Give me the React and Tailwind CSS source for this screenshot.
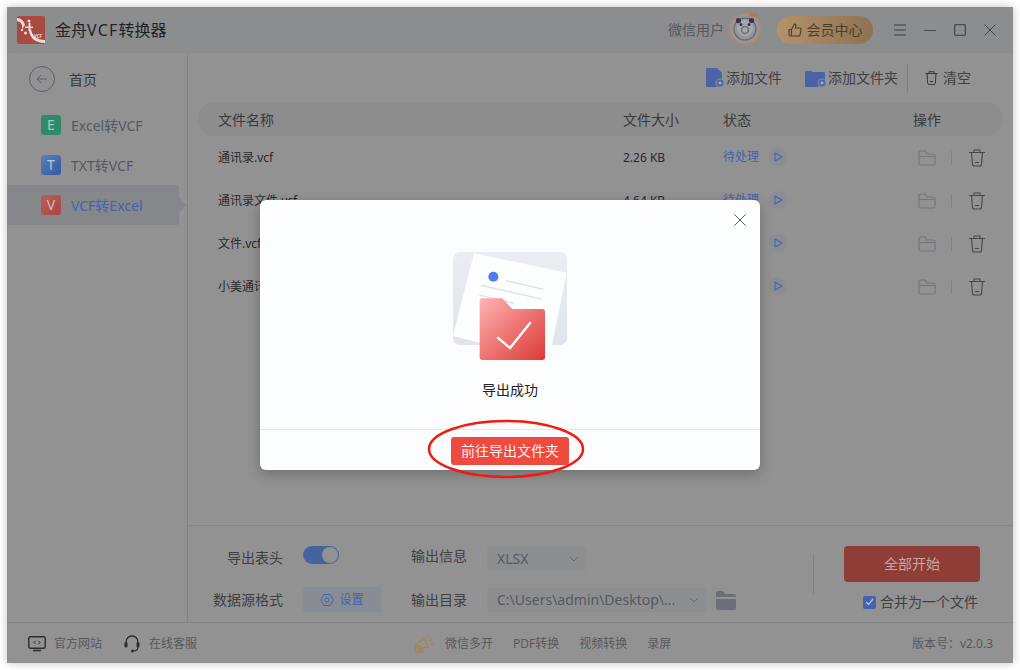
import React from "react";

const rows = [
  ["通讯录.vcf", "2.26 KB"],
  ["通讯录文件.vcf", "4.64 KB"],
  ["文件.vcf", "1.28 KB"],
  ["小美通讯录.vcf", "3.12 KB"],
];

function Logo() {
  return (
    <svg width="28" height="28" viewBox="0 0 28 28">
      <rect width="28" height="28" rx="2" fill="#a9493f" />
      <path d="M0 2c4 0 7 3 8 7-1 2-2 3-3 4 1-4-1-7-5-8z" fill="#e7dcd9" />
      <circle cx="12" cy="5" r="1.6" fill="#e7dcd9" />
      <circle cx="5" cy="14" r="1.2" fill="#e7dcd9" />
      <path d="M8 10.5h8v1.5H8z" fill="#e7dcd9" />
      <path d="M11.5 7h2v8h-2z" fill="#e7dcd9" />
      <circle cx="8.5" cy="17" r="1.5" fill="#e7dcd9" />
      <path d="M14 13c1 7 6 11 14 11v3C18 27 13 22 12 15z" fill="#e7dcd9" />
      <text x="17" y="22" fontSize="4.6" fontWeight="700" fontStyle="italic" fill="#e7dcd9">VCF</text>
    </svg>
  );
}

function Avatar() {
  return (
    <svg width="34" height="36" viewBox="0 0 34 36">
      <circle cx="16" cy="20" r="15.2" fill="#949699" stroke="#b08a68" strokeWidth="1.6" />
      <circle cx="16" cy="20" r="11" fill="none" stroke="#5f6672" strokeWidth="1.1" />
      <circle cx="16" cy="19" r="8" fill="#a8a8a8" />
      <circle cx="9.5" cy="11.5" r="2.6" fill="#3b3348" />
      <circle cx="22.5" cy="11.5" r="2.6" fill="#3b3348" />
      <circle cx="12" cy="15.5" r="1.5" fill="#3b3348" />
      <circle cx="20" cy="15.5" r="1.5" fill="#3b3348" />
      <circle cx="16" cy="21" r="3.5" fill="none" stroke="#6a7080" strokeWidth="1.6" />
      <path d="M20 7l1-4 2 2 2-3 1 3 3-1-2 4z" fill="#ab7a55" />
    </svg>
  );
}

function FolderLine() {
  return (
    <svg width="18" height="16" viewBox="0 0 18 16" fill="none" stroke="#75777c" strokeWidth="1.2">
      <path d="M1 3a2 2 0 012-2h4l2 3h6a2 2 0 012 2v7a2 2 0 01-2 2H3a2 2 0 01-2-2z" />
      <path d="M1 6.5h16" />
    </svg>
  );
}

function TrashLine() {
  return (
    <svg width="18" height="18" viewBox="0 0 18 18" fill="none" stroke="#45474b" strokeWidth="1.1">
      <path d="M1 3.5h16M6 3.5V1h6v2.5M3.5 3.5l1 11.5a2 2 0 002 2h5a2 2 0 002-2l1-11.5M7 13.5h4" />
    </svg>
  );
}

function PlayBadge() {
  return (
    <span className="mb-[2px] ml-[10px] flex h-[18px] w-[18px] items-center justify-center rounded-full bg-[#8a8d94]">
      <svg width="9" height="10" viewBox="0 0 9 10" fill="none" stroke="#4a63a8" strokeWidth="1.1">
        <path d="M1 1l7 4-7 4z" strokeLinejoin="round" />
      </svg>
    </span>
  );
}

function AddFileIcon({ wide }) {
  return (
    <svg width={wide ? 21 : 18} height="20" viewBox={wide ? "0 0 21 20" : "0 0 18 20"}>
      {wide ? (
        <path d="M0 4a1 1 0 011-1h5l2 1h11a1 1 0 011 1v13a1 1 0 01-1 1H1a1 1 0 01-1-1z" fill="#4a63a8" />
      ) : (
        <path d="M0 1a1 1 0 011-1h10l5 5v13a1 1 0 01-1 1H1a1 1 0 01-1-1z" fill="#4a63a8" />
      )}
      <circle cx={wide ? 17 : 14} cy="15" r="4.5" fill="#8f9095" />
      <circle cx={wide ? 17 : 14} cy="15" r="3.4" fill="#4a63a8" />
      <path d={wide ? "M15.3 15h3.4M17 13.3v3.4" : "M12.3 15h3.4M14 13.3v3.4"} stroke="#c5cbdc" strokeWidth="0.9" />
    </svg>
  );
}

function Illustration() {
  return (
    <svg width="114" height="108" viewBox="157 66 342 324">
      <defs>
        <linearGradient id="fg" x1="0" y1="0" x2="1" y2="1">
          <stop offset="0" stopColor="#ffb3b3" />
          <stop offset="1" stopColor="#dc3a36" />
        </linearGradient>
        <linearGradient id="bgg" x1="0" y1="0" x2="0" y2="1">
          <stop offset="0" stopColor="#eaedf2" />
          <stop offset="1" stopColor="#e0e5ed" />
        </linearGradient>
        <clipPath id="cp">
          <rect x="157" y="66" width="342" height="279" rx="21" />
        </clipPath>
      </defs>
      <rect x="157" y="66" width="342" height="279" rx="21" fill="url(#bgg)" />
      <polygon points="220,70 498,128 445,390 157,318" fill="#fdfefe" clipPath="url(#cp)" />
      <circle cx="278" cy="140" r="15" fill="#4f7cf0" />
      <g stroke="#d9dee8" strokeWidth="3.5">
        <path d="M316 152L428 178M242 166L422 207M235 195L340 220" />
      </g>
      <path d="M237 213a8 8 0 018-8h60l30 32h90a8 8 0 018 8v137a8 8 0 01-8 8H245a8 8 0 01-8-8z" fill="url(#fg)" />
      <path d="M290 322L328 354L390 277" fill="none" stroke="#fff" strokeWidth="7" />
    </svg>
  );
}

export default function App() {
  return (
    <div className="h-[670px] w-[1020px] bg-white p-[7px] font-['Noto_Sans','Noto_Sans_CJK_SC',sans-serif]">
      <div className="relative flex h-[656px] w-[1006px] flex-col bg-[#929292] shadow-[0_0_8px_rgba(0,0,0,0.25)]">
        {/* title bar */}
        <header className="flex h-[46px] shrink-0 items-center bg-[#8c8d8f] pl-[10px] pr-[17px]">
          <Logo />
          <span className="ml-[10px] text-base text-[#232323]">金舟<span className="tracking-[1.2px]">VCF</span>转换器</span>
          <span className="ml-auto text-sm text-[#57585b]">微信用户</span>
          <span className="ml-[5px] mt-[-7px]"><Avatar /></span>
          <span className="ml-[14px] flex h-[28px] w-[96px] items-center justify-center gap-[5px] rounded-full bg-gradient-to-r from-[#b4926a] to-[#8f7252] text-sm text-[#4a3d2e]">
            <svg width="14" height="14" viewBox="0 0 14 14" fill="none" stroke="#4a3d2e" strokeWidth="1.1">
              <path d="M1 6.5h2.5V13H2a1 1 0 01-1-1zM3.5 6.5L6.5 1c1.2.3 1.6 1.2 1.3 2.5L7.5 5H12a1 1 0 011 1.2l-1 5.8a1 1 0 01-1 1H3.5" strokeLinejoin="round" />
            </svg>
            会员中心
          </span>
          <svg className="ml-[21px]" width="12" height="12" viewBox="0 0 12 12" stroke="#55575b" strokeWidth="1.3"><path d="M0 1h12M0 6h12M0 11h12" /></svg>
          <svg className="ml-[18px]" width="12" height="12" viewBox="0 0 12 12" stroke="#45474b" strokeWidth="1"><path d="M0 6.5h12" /></svg>
          <svg className="ml-[18px]" width="12" height="12" viewBox="0 0 12 12" fill="none" stroke="#45474b" strokeWidth="1.3"><rect x="0.7" y="0.7" width="10.6" height="10.6" rx="1" /></svg>
          <svg className="ml-[18px]" width="12" height="12" viewBox="0 0 12 12" stroke="#45474b" strokeWidth="1"><path d="M0.5 0.5l11 11M11.5 0.5l-11 11" /></svg>
        </header>

        <div className="flex min-h-0 flex-1">
          {/* sidebar */}
          <aside className="flex w-[181px] shrink-0 flex-col rounded-tl-[14px] border-r border-[#838487] bg-[#929293]">
            <div className="ml-[22px] mt-[13px] flex items-center">
              <span className="flex h-[26px] w-[26px] items-center justify-center rounded-full border border-[#5c606b]">
                <svg width="12" height="10" viewBox="0 0 12 10" fill="none" stroke="#5c606b" strokeWidth="1"><path d="M11 5H1M5 1L1 5l4 4" /></svg>
              </span>
              <span className="ml-[14px] mt-[2px] text-sm text-[#38393b]">首页</span>
            </div>
            <div className="mt-[23px] flex h-[20px] items-center pl-[34px]">
              <span className="flex h-[20px] w-[20px] items-center justify-center rounded-[3px] bg-[#2e8a69] text-sm text-[#a9c8bb]">E</span>
              <span className="ml-[10px] mt-[2px] text-sm text-[#55585f]">Excel转VCF</span>
            </div>
            <div className="mt-[20px] flex h-[20px] items-center pl-[34px]">
              <span className="flex h-[20px] w-[20px] items-center justify-center rounded-[3px] bg-gradient-to-br from-[#5d7fb8] to-[#2f5a9e] text-sm text-[#b8c6dc]">T</span>
              <span className="ml-[10px] mt-[2px] text-sm text-[#55585f]">TXT转VCF</span>
            </div>
            <div className="relative mt-[10px] flex h-[40px] w-[172px] items-center rounded-r-[3px] bg-[#85878b] pl-[34px]">
              <span className="flex h-[20px] w-[20px] items-center justify-center rounded-[3px] bg-gradient-to-br from-[#b85f5c] to-[#a64744] text-sm text-[#dcb8b6]">V</span>
              <span className="ml-[10px] mt-[2px] text-sm text-[#4462ad]">VCF转Excel</span>
              <span className="absolute left-[172px] top-[12px] h-0 w-0 border-y-[8px] border-l-[7px] border-y-transparent border-l-[#85878b]" />
            </div>
          </aside>

          {/* main */}
          <main className="flex min-w-0 flex-1 flex-col">
            <div className="flex h-[49px] shrink-0 items-center justify-end pr-[42px] pt-[1px] text-sm text-[#3f4042]">
              <AddFileIcon />
              <span className="ml-[2px]">添加文件</span>
              <span className="ml-[23px]"><AddFileIcon wide /></span>
              <span className="ml-[2px]">添加文件夹</span>
              <span className="ml-[9px] h-[28px] w-px bg-[#7a7b7e]" />
              <svg className="ml-[17px]" width="13" height="14" viewBox="0 0 13 14" fill="none" stroke="#38393b" strokeWidth="1"><path d="M0.5 2.5h12M4 2.5V.7h5v1.8M2 2.5l.7 9.5a1.5 1.5 0 001.5 1.5h4.6a1.5 1.5 0 001.5-1.5l.7-9.5M5 10.5h3" /></svg>
              <span className="ml-[5px]">清空</span>
            </div>

            <div className="ml-[10px] mr-[10px] flex h-[34px] shrink-0 items-center rounded-full bg-[#8d8d8e] pt-[2px] text-sm text-[#38393b]">
              <span className="ml-[20px] w-[405px]">文件名称</span>
              <span className="w-[100px]">文件大小</span>
              <span className="w-[190px]">状态</span>
              <span>操作</span>
            </div>

            <div className="min-h-0 flex-1">
              {rows.map(([name, size]) => (
                <div key={name} className="ml-[30px] flex h-[43px] items-center text-xs text-[#2a2a2b]">
                  <span className="w-[405px]">{name}</span>
                  <span className="w-[100px]">{size}</span>
                  <span className="mb-[2px] text-[#4462ad]">待处理</span>
                  <PlayBadge />
                  <span className="ml-[131px]"><FolderLine /></span>
                  <span className="ml-[15px] h-[14px] w-px bg-[#808185]" />
                  <span className="ml-[16px]"><TrashLine /></span>
                </div>
              ))}
            </div>

            {/* options */}
            <div className="flex h-[97px] shrink-0 border-t border-[#858585] text-sm text-[#3f4042]">
              <div className="flex w-[223px] shrink-0 flex-col">
                <div className="mt-[20px] flex h-[18px] items-center">
                  <span className="mt-[6px] w-[95px] text-right">导出表头</span>
                  <span className="ml-[20px] flex h-[18px] w-[36px] items-center justify-end rounded-full bg-[#47639f] pr-[1px]">
                    <span className="h-[16px] w-[16px] rounded-full bg-[#929292]" />
                  </span>
                </div>
                <div className="mt-[23px] flex h-[25px] items-center">
                  <span className="w-[95px] text-right">数据源格式</span>
                  <span className="ml-[20px] flex h-[25px] w-[78px] items-center justify-center gap-[5px] rounded-[3px] bg-[#888c93] text-xs text-[#4462ad]">
                    <svg width="14" height="14" viewBox="0 0 14 14" fill="none" stroke="#4462ad" strokeWidth="1"><path d="M4 1.5h6L13.3 7 10 12.5H4L.7 7z" /><circle cx="7" cy="7" r="2" /></svg>
                    设置
                  </span>
                </div>
              </div>
              <div className="flex flex-col">
                <div className="mt-[21px] flex h-[24px] items-center">
                  <span className="mb-[6px] w-[76px]">输出信息</span>
                  <span className="flex h-[24px] w-[99px] items-center justify-between rounded-[3px] bg-[#8d8e90] pl-[10px] pr-[7px] text-[#55585f]">
                    XLSX
                    <svg width="10" height="6" viewBox="0 0 10 6" fill="none" stroke="#66686d" strokeWidth="1"><path d="M1 1l4 4 4-4" /></svg>
                  </span>
                </div>
                <div className="mt-[17px] flex items-center">
                  <span className="w-[76px]">输出目录</span>
                  <span className="flex h-[24px] w-[219px] items-center justify-between rounded-[3px] bg-[#8d8e90] pl-[10px] pr-[7px] text-[#55585f]">
                    C:\Users\admin\Desktop\...
                    <svg width="10" height="6" viewBox="0 0 10 6" fill="none" stroke="#66686d" strokeWidth="1"><path d="M1 1l4 4 4-4" /></svg>
                  </span>
                  <svg className="ml-[10px]" width="20" height="19" viewBox="0 0 20 19"><path d="M0 2a2 2 0 012-2h5l2 3h9a2 2 0 012 2v1H0zM0 8h20v9a2 2 0 01-2 2H2a2 2 0 01-2-2z" fill="#6c6f78" /></svg>
                </div>
              </div>
              <span className="ml-[77px] mt-[28px] h-[40px] w-px bg-[#7f8083]" />
              <div className="ml-[30px] flex flex-col items-start">
                <span className="mt-[20px] flex h-[36px] w-[136px] items-center justify-center rounded-[4px] bg-[#8f3e37] text-sm text-[#c9a5a1]">全部开始</span>
                <span className="ml-[19px] mt-[10px] flex items-center gap-[4px]">
                  <span className="flex h-[13px] w-[13px] items-center justify-center rounded-[2px] bg-[#4462ad]">
                    <svg width="9" height="8" viewBox="0 0 9 8" fill="none" stroke="#b9c2da" strokeWidth="1.2"><path d="M1 4l2.5 2.5L8 1" /></svg>
                  </span>
                  合并为一个文件
                </span>
              </div>
            </div>
          </main>
        </div>

        {/* footer */}
        <footer className="flex h-[41px] shrink-0 items-center border-t border-[#858585] pl-[21px] pr-[20px] pt-[2px] text-xs text-[#57585b]">
          <svg width="18" height="16" viewBox="0 0 18 16" fill="none">
            <rect x="0.8" y="0.8" width="16.4" height="11.4" rx="1.5" stroke="#2c2d2f" strokeWidth="1.4" />
            <path d="M5 14.5h8" stroke="#2c2d2f" strokeWidth="1.6" />
            <path d="M7.5 4.8L6 6.5l1.5 1.7M10.5 4.8L12 6.5l-1.5 1.7" stroke="#2c2d2f" strokeWidth="1" />
          </svg>
          <span className="ml-[8px]">官方网站</span>
          <svg className="ml-[22px]" width="16" height="18" viewBox="0 0 16 18" fill="none">
            <path d="M2 9V7a6 6 0 0112 0v2" stroke="#2c2d2f" strokeWidth="1.3" />
            <rect x="0.5" y="7" width="3" height="5.5" rx="1.5" fill="#2c2d2f" />
            <rect x="12.5" y="7" width="3" height="5.5" rx="1.5" fill="#2c2d2f" />
            <path d="M14 12c0 3-2 4-5 4" stroke="#2c2d2f" strokeWidth="1.1" />
            <circle cx="8.5" cy="16" r="1.4" fill="#2c2d2f" />
          </svg>
          <span className="ml-[9px]">在线客服</span>
          <svg className="ml-[217px]" width="21" height="20" viewBox="0 0 21 20" fill="none" stroke="#a9825a" strokeWidth="1.5">
            <path d="M1.5 10.5L10.5 4.5 14 13l-9.5 2z" strokeLinejoin="round" />
            <circle cx="4.5" cy="15" r="3.2" />
            <path d="M8 16l1.5 3" />
            <path d="M14 1l-1.2 3.5M18.5 4L15.5 7M20.5 10h-3.5" strokeWidth="1.3" />
          </svg>
          <span className="ml-[10px]">微信多开</span>
          <span className="ml-[20px]">PDF转换</span>
          <span className="ml-[20px]">视频转换</span>
          <span className="ml-[20px]">录屏</span>
          <span className="ml-auto">版本号：v2.0.3</span>
        </footer>

        {/* dialog */}
        <div className="absolute left-[253px] top-[193px] flex h-[270px] w-[500px] flex-col rounded-[6px] bg-[#fcfdff] shadow-[0_4px_14px_rgba(0,0,0,0.25)]">
          <button className="absolute right-[14px] top-[14px]">
            <svg className="block" width="12" height="12" viewBox="0 0 12 12" stroke="#555" strokeWidth="1"><path d="M0.5 0.5l11 11M11.5 0.5l-11 11" /></svg>
          </button>
          <div className="flex h-[230px] flex-col items-center border-b border-[#e6e6e6]">
            <span className="mt-[52px]"><Illustration /></span>
            <span className="mt-[20px] text-sm leading-5 text-[#222]">导出成功</span>
          </div>
          <div className="relative flex flex-1 items-start justify-center pt-[7px]">
            <span className="flex h-[28px] w-[118px] items-center justify-center rounded-[3px] bg-[#ef4a3f] text-sm text-[#fdeeee]">前往导出文件夹</span>
            <svg className="absolute left-[168px] top-[-10px] overflow-visible" width="156" height="58" viewBox="0 0 156 58" fill="none">
              <ellipse cx="78" cy="29" rx="77" ry="28" stroke="#f01c10" strokeWidth="2.5" />
            </svg>
          </div>
        </div>
      </div>
    </div>
  );
}
